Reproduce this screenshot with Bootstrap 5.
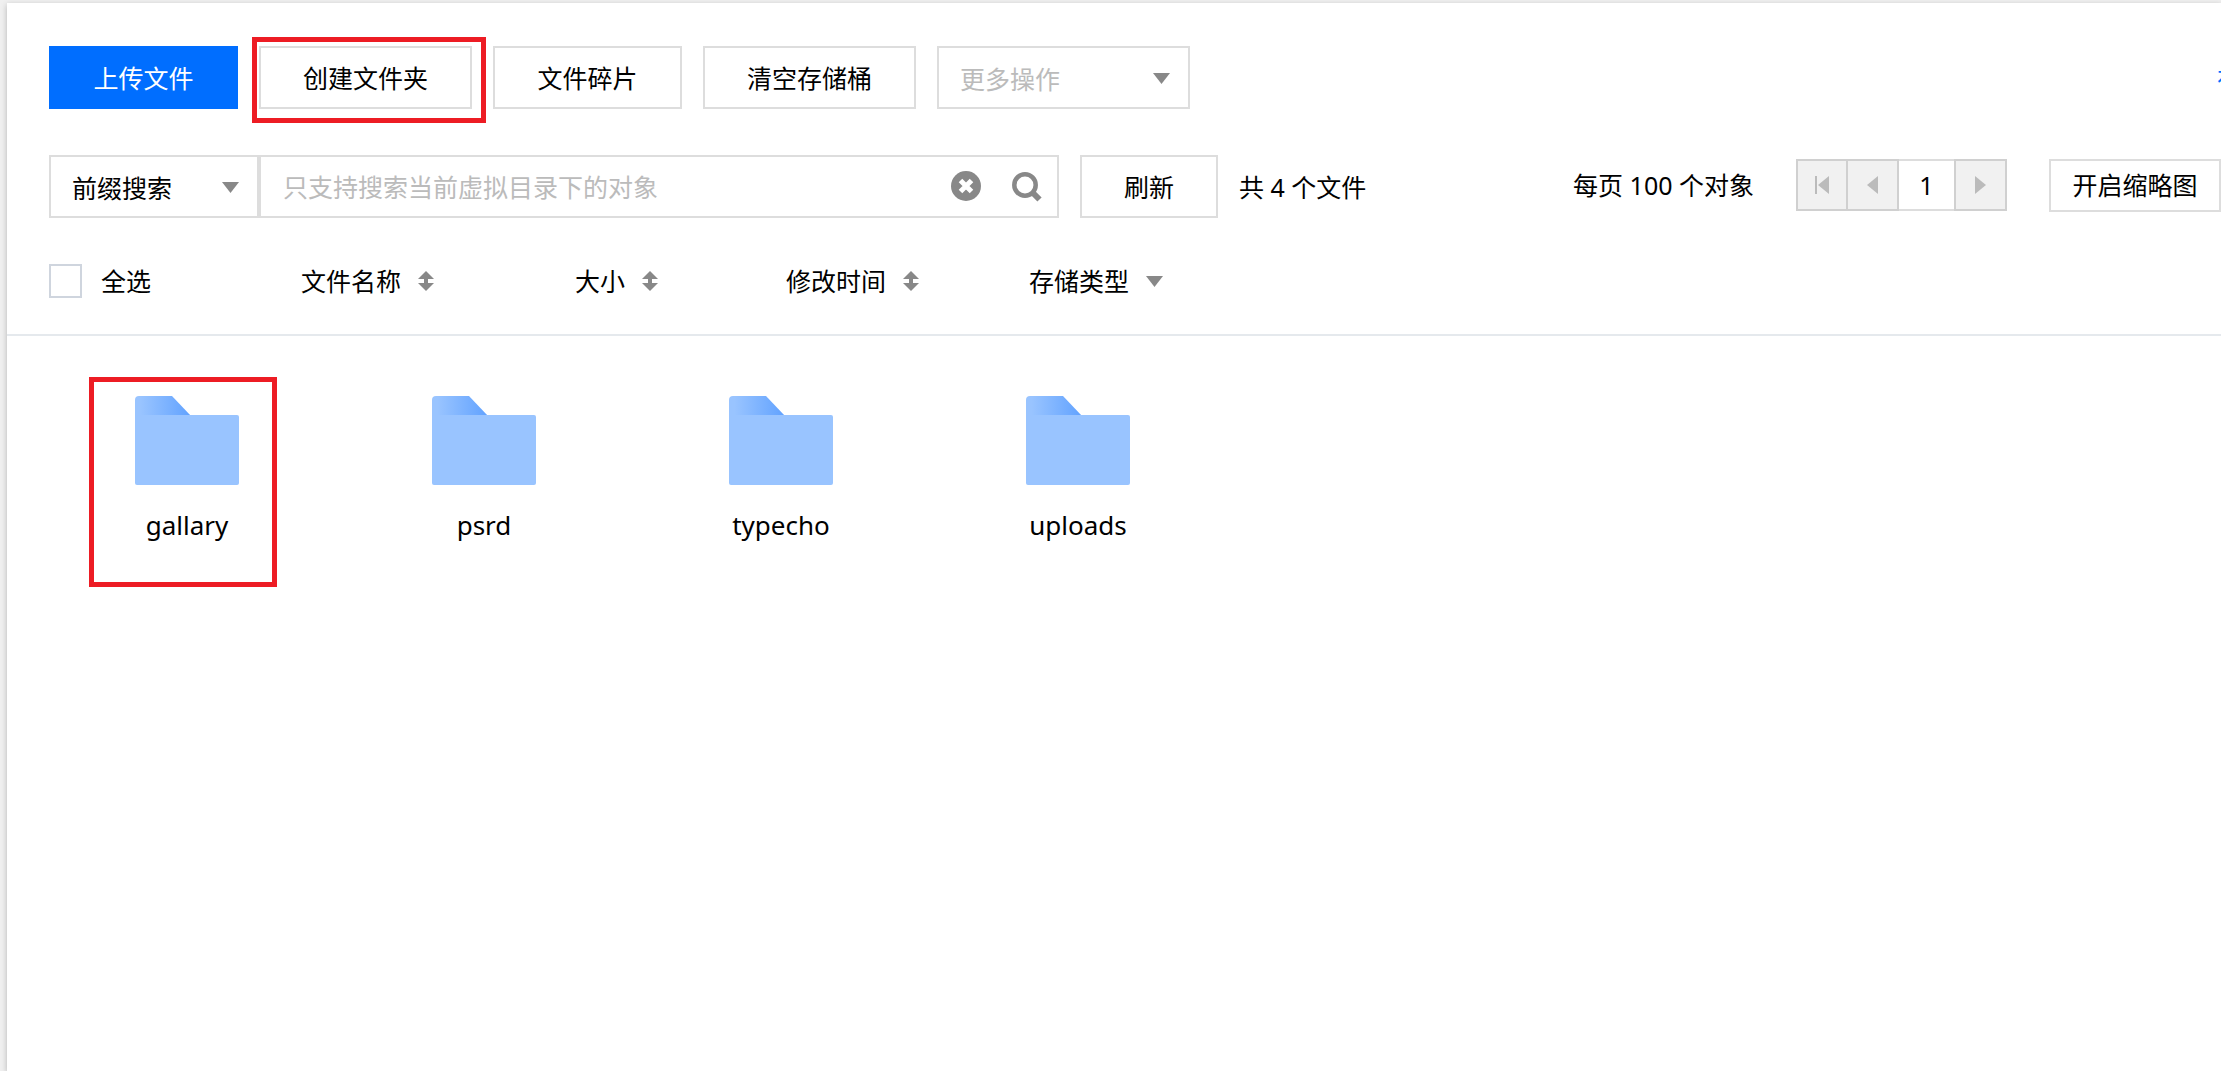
<!DOCTYPE html>
<html lang="zh-CN">
<head>
<meta charset="utf-8">
<meta name="viewport" content="width=device-width, initial-scale=1">
<title>文件列表</title>
<link href="https://cdn.jsdelivr.net/npm/bootstrap@5.3.0/dist/css/bootstrap.min.css" rel="stylesheet">
<style>
  :root { --line: #ddd; --icon: #888; --brand: #006eff; --marker: #ed1c24; }
  body { background: #f0f0f0; color: #000; font-family: "Noto Sans", "Noto Sans CJK SC", sans-serif; font-size: 25px; line-height: 34px; overflow-x: hidden; }
  svg { display: block; flex: none; }
  .panel { margin: 3px 0 0 7px; padding-top: 43px; min-height: calc(100vh - 3px); background: #fff; box-shadow: 0 2px 6px rgba(0,0,0,.25); }
  .bar { padding-left: 42px; }
  .bar + .bar { padding-top: 46px; }
  .actions { gap: 21px; }
  .btn, .form-select, .form-control { font-size: 25px; line-height: 34px; border-radius: 0; color: #000; }
  .cos-btn { height: 63px; padding: 0; border: 2px solid var(--line); background: #fff; }
  .cos-btn.main { background: var(--brand); border-color: var(--brand); color: #fff; }
  .w-four { width: 189px; }
  .w-five { width: 213px; }
  .w-two { width: 138px; margin: 0 21px; }
  .pick { position: relative; }
  .pick .form-select { height: 63px; padding: 2px 48px 0 21px; border: 2px solid var(--line); background: #fff; }
  .pick .form-select.dim { color: #bbb; }
  .pick svg { position: absolute; right: 20px; top: 27px; pointer-events: none; }
  .w-more { width: 253px; }
  .w-prefix { width: 210px; }
  .find { width: 800px; height: 63px; border: 2px solid var(--line); padding-right: 15px; }
  .find .form-control { border: 0; padding: 0 0 0 22px; background: none; }
  .find .form-control::placeholder { color: #bbb; opacity: 1; }
  .icon-btn { padding: 0; border: 0; background: none; }
  .find-tools { gap: 31px; }
  .marked { position: relative; }
  .marked::after { content: ""; position: absolute; border: 5px solid var(--marker); pointer-events: none; }
  .mark-btn::after { inset: -9px -14px -14px -7px; }
  .mark-tile::after { inset: -19px -37px -15px -45px; }
  .edge-link { margin-right: -21px; color: var(--brand); text-decoration: none; }
  .paging { padding-bottom: 3px; gap: 42px; }
  .pager { height: 52px; border: 2px solid var(--line); }
  .pager button { width: 53px; margin: -2px 0; border: 2px solid #d0d0d0; background: #f1f1f1; padding: 0; }
  .pager button:first-child { width: 52px; margin-left: -2px; margin-right: -2px; }
  .pager button:last-child { margin-right: -2px; }
  .pager input { width: 55px; border: 0; padding: 0; text-align: center; background: #fff; color: #000; }
  .thumb-btn { height: 53px; width: 172px; }
  .heads { padding-bottom: 36px; border-bottom: 2px solid #e5e9ed; }
  .heads .form-check-input { width: 33px; height: 34px; margin: 0 19px 0 0; border: 2px solid #cfd5de; border-radius: 0; }
  .head-btn { gap: 17px; border: 0; padding: 0; background: none; color: #000; }
  .c-all { width: 252px; } .c-name { width: 274px; } .c-size { width: 211px; } .c-time { width: 243px; }
  .files { padding: 60px 0 0 127px; column-gap: 191px; row-gap: 60px; }
  .tile { width: 106px; height: 176px; color: #000; text-decoration: none; gap: 22px; font-size: 26px; }
</style>
<script src="https://cdn.jsdelivr.net/npm/bootstrap@5.3.0/dist/js/bootstrap.bundle.min.js"></script>
</head>
<body>
<svg width="0" height="0" class="position-absolute" aria-hidden="true">
  <defs>
    <linearGradient id="tab" x1="0" x2="1" y1="0" y2="0"><stop offset=".1" stop-color="#99c4ff"/><stop offset="1" stop-color="#61a2ff"/></linearGradient>
    <symbol id="folder" viewBox="0 0 104 90">
      <path d="M0 22V4Q0 0 4 0H37L56 20V22Z" fill="url(#tab)"/>
      <path d="M0 19H102Q104 19 104 21V87Q104 89 102 89H2Q0 89 0 87Z" fill="#99c4ff"/>
    </symbol>
    <symbol id="caret" viewBox="0 0 17 11"><path d="M0 0H17L8.500 11Z" fill="#888"/></symbol>
    <symbol id="sort" viewBox="0 0 16 20"><path d="M8 0L16 8H10V12H16L8 20L0 12H6V8H0Z" fill="#888"/></symbol>
  </defs>
</svg>
<main class="panel">
  <div class="bar actions d-flex align-items-center">
    <button type="button" class="btn cos-btn main w-four">上传文件</button>
    <div class="marked mark-btn"><button type="button" class="btn cos-btn w-five">创建文件夹</button></div>
    <button type="button" class="btn cos-btn w-four">文件碎片</button>
    <button type="button" class="btn cos-btn w-five">清空存储桶</button>
    <div class="pick w-more">
      <select class="form-select dim" aria-label="更多操作"><option>更多操作</option></select>
      <svg width="17" height="11"><use href="#caret"/></svg>
    </div>
    <a href="#" class="edge-link ms-auto">在</a>
  </div>

  <div class="bar d-flex align-items-center">
    <div class="pick w-prefix">
      <select class="form-select" aria-label="前缀搜索"><option>前缀搜索</option></select>
      <svg width="17" height="11"><use href="#caret"/></svg>
    </div>
    <div class="find d-flex align-items-center">
      <input type="text" class="form-control shadow-none" placeholder="只支持搜索当前虚拟目录下的对象" aria-label="搜索对象">
      <div class="find-tools d-flex">
        <button type="button" class="icon-btn" aria-label="清除">
          <svg width="30" height="32" viewBox="0 0 30 32"><circle cx="15" cy="15" r="15" fill="#888"/><path d="M9.500 9.500L20.500 20.500M20.500 9.500L9.500 20.500" stroke="#fff" stroke-width="5"/></svg>
        </button>
        <button type="button" class="icon-btn" aria-label="搜索">
          <svg width="30" height="30" viewBox="0 0 30 30" fill="none" stroke="#888"><circle cx="13" cy="13" r="10.700" stroke-width="4.500"/><path d="M20 20L27.500 27.500" stroke-width="6"/></svg>
        </button>
      </div>
    </div>
    <button type="button" class="btn cos-btn w-two">刷新</button>
    <span>共 4 个文件</span>
    <div class="paging d-flex align-items-center ms-auto">
      <span>每页 100 个对象</span>
      <div class="pager d-flex">
        <button type="button" class="d-flex align-items-center justify-content-center" disabled aria-label="首页"><svg width="14" height="18"><path d="M0 0H2V18H0ZM14 0V18L3 9Z" fill="#bbb"/></svg></button>
        <button type="button" class="d-flex align-items-center justify-content-center" disabled aria-label="上一页"><svg width="11" height="18"><path d="M11 0V18L0 9Z" fill="#bbb"/></svg></button>
        <input type="text" value="1" aria-label="页码">
        <button type="button" class="d-flex align-items-center justify-content-center" disabled aria-label="下一页"><svg width="11" height="18"><path d="M0 0V18L11 9Z" fill="#bbb"/></svg></button>
      </div>
      <button type="button" class="btn cos-btn thumb-btn">开启缩略图</button>
    </div>
  </div>

  <div class="bar heads d-flex align-items-center">
    <div class="c-all d-flex align-items-center">
      <input class="form-check-input" type="checkbox" id="all"><label for="all">全选</label>
    </div>
    <div class="c-name"><button type="button" class="head-btn d-flex align-items-center">文件名称 <svg width="16" height="20"><use href="#sort"/></svg></button></div>
    <div class="c-size"><button type="button" class="head-btn d-flex align-items-center">大小 <svg width="16" height="20"><use href="#sort"/></svg></button></div>
    <div class="c-time"><button type="button" class="head-btn d-flex align-items-center">修改时间 <svg width="16" height="20"><use href="#sort"/></svg></button></div>
    <div><button type="button" class="head-btn d-flex align-items-center">存储类型 <svg width="17" height="11"><use href="#caret"/></svg></button></div>
  </div>

  <div class="files d-flex flex-wrap">
    <a href="#" class="tile marked mark-tile d-flex flex-column align-items-center"><svg width="104" height="90"><use href="#folder"/></svg>gallary</a>
    <a href="#" class="tile d-flex flex-column align-items-center"><svg width="104" height="90"><use href="#folder"/></svg>psrd</a>
    <a href="#" class="tile d-flex flex-column align-items-center"><svg width="104" height="90"><use href="#folder"/></svg>typecho</a>
    <a href="#" class="tile d-flex flex-column align-items-center"><svg width="104" height="90"><use href="#folder"/></svg>uploads</a>
  </div>
</main>
</body>
</html>
